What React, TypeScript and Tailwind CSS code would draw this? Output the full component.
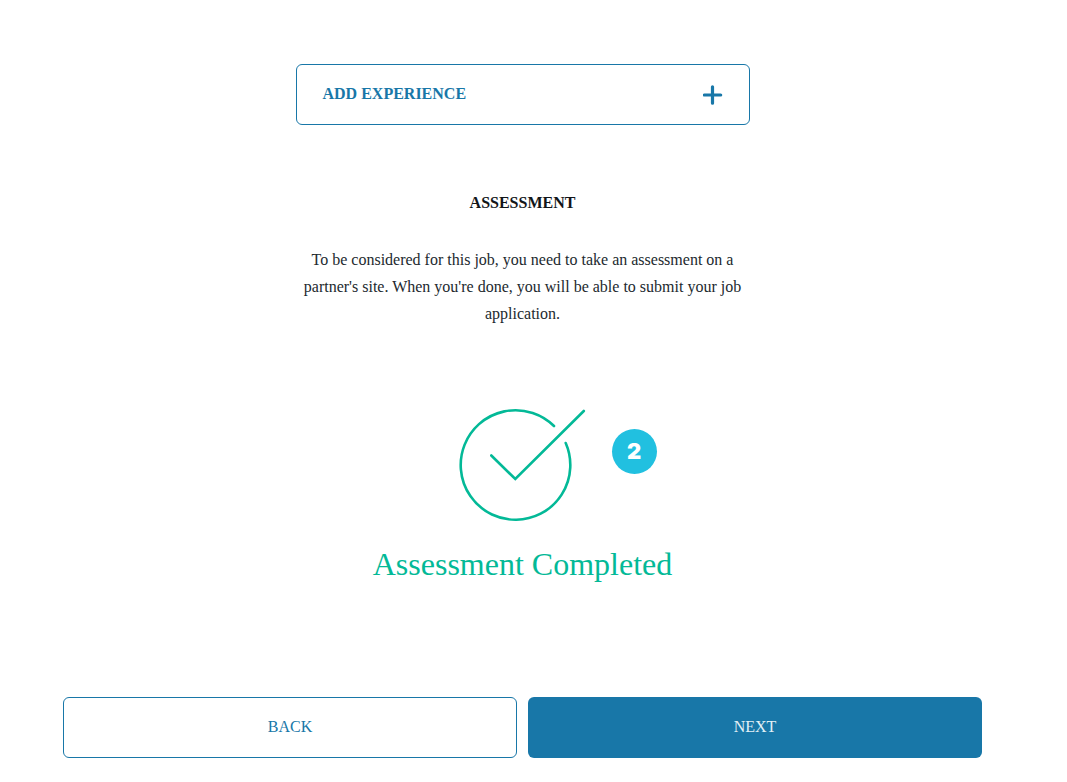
import React from "react";

function PlusIcon() {
  return (
    <svg width="20" height="20" viewBox="0 0 20 20" fill="none" stroke="#1877a8" strokeWidth="3.2" strokeLinecap="round" aria-hidden="true">
      <path d="M9.5 1.8v16.4M1.3 10h16.4" />
    </svg>
  );
}

function CompletedIcon() {
  return (
    <svg width="128" height="114" viewBox="0 0 128 114" fill="none" stroke="#03b997" strokeWidth="2.6" strokeLinecap="round" aria-hidden="true">
      <path d="M95 18A54.8 54.8 0 1 0 106.7 35" />
      <path d="M32.3 47.5L56.3 71L124.8 3" strokeLinejoin="miter" />
    </svg>
  );
}

function StepBadge({ step }: { step: number }) {
  return (
    <span className="absolute top-[21px] left-full ml-[25px] flex size-[45px] items-center justify-center rounded-full bg-[#21c0e0] pb-0.5 font-['Inter',sans-serif] text-[22px] leading-none font-black text-white">
      {step}
    </span>
  );
}

export default function App() {
  return (
    <main className="flex flex-col items-center bg-white pt-16 pr-[22px] pb-6 font-['Liberation_Serif',serif] text-base leading-[27px] text-[#22292e]">
      <section className="flex w-full max-w-[454px] flex-col items-center text-center">
        <button
          type="button"
          className="flex h-[61px] w-full items-center justify-between rounded-md border border-[#1877a8] px-[26px] font-bold text-[#1877a8]"
        >
          <span className="pb-0.5">ADD EXPERIENCE</span>
          <PlusIcon />
        </button>

        <h2 className="mt-16 font-bold text-[#111518]">ASSESSMENT</h2>
        <p className="mt-[30px]">
          To be considered for this job, you need to take an assessment on a partner's site. When you're done, you will
          be able to submit your job application.
        </p>

        <div className="relative mt-[81px]">
          <CompletedIcon />
          <StepBadge step={2} />
        </div>
        <p className="mt-[22px] text-[32px] leading-10 text-[#03b997]">Assessment Completed</p>
      </section>

      <nav aria-label="Application steps" className="mt-[113px] grid w-full grid-cols-2 gap-[11px] px-[63px]">
        <button type="button" className="h-[61px] rounded-md border border-[#1877a8] pb-0.5 text-[#1877a8]">
          BACK
        </button>
        <button type="button" className="h-[61px] rounded-md bg-[#1877a8] pb-0.5 text-[#e3f1f7]">
          NEXT
        </button>
      </nav>
    </main>
  );
}
